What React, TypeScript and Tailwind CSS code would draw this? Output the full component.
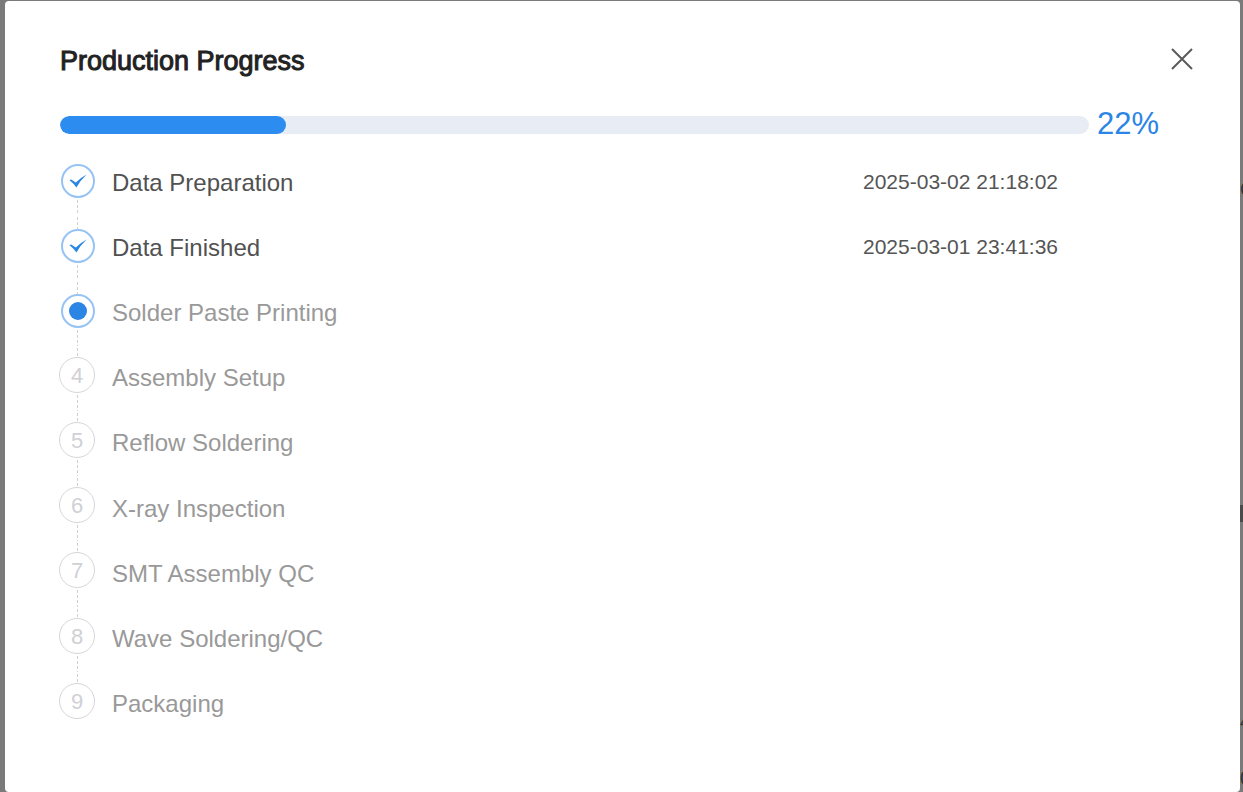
import { clsx } from 'clsx';

type Status = 'done' | 'current' | 'pending';

type Step = {
  label: string;
  status: Status;
  time?: string;
};

const progress = 22;

const steps: Step[] = [
  { label: 'Data Preparation', status: 'done', time: '2025-03-02 21:18:02' },
  { label: 'Data Finished', status: 'done', time: '2025-03-01 23:41:36' },
  { label: 'Solder Paste Printing', status: 'current' },
  { label: 'Assembly Setup', status: 'pending' },
  { label: 'Reflow Soldering', status: 'pending' },
  { label: 'X-ray Inspection', status: 'pending' },
  { label: 'SMT Assembly QC', status: 'pending' },
  { label: 'Wave Soldering/QC', status: 'pending' },
  { label: 'Packaging', status: 'pending' },
];

function Badge({ status, index }: { status: Status; index: number }) {
  if (status === 'pending') {
    return (
      <span className="flex size-9 shrink-0 items-center justify-center rounded-full border border-[#d6d6da] pt-0.5 text-[22px] leading-none text-[#d0d0d6]">
        {index + 1}
      </span>
    );
  }

  return (
    <span className="flex size-[34px] shrink-0 items-center justify-center self-end rounded-full border-2 border-[#96c3f4]">
      {status === 'done' ? (
        <svg viewBox="0 0 18 14" className="h-[14px] w-[18px]" fill="#2b85e4" aria-hidden="true">
          <path d="M0.4 6 L2.2 5.6 L6.8 8.6 Q11.5 3.6 17.6 0.4 Q11.6 6 7.4 13.4 Q4.4 9.4 0.4 6 Z" />
        </svg>
      ) : (
        <span className="size-[18px] rounded-full bg-[#2b85e4]" />
      )}
    </span>
  );
}

function Connector({ hidden, className }: { hidden: boolean; className: string }) {
  return (
    <span
      className={clsx(
        'w-px bg-[repeating-linear-gradient(to_bottom,transparent_0px,transparent_2px,#cfcfcf_2px,#cfcfcf_5px)]',
        hidden && 'invisible',
        className
      )}
    />
  );
}

function StepRow({ step, index }: { step: Step; index: number }) {
  return (
    <li className="flex items-center">
      <div className="flex h-full w-9 flex-col items-center">
        <Connector
          hidden={index === 0}
          className={step.status === 'pending' ? 'h-[11px]' : 'h-[14px]'}
        />
        <Badge status={step.status} index={index} />
        <Connector hidden={index === steps.length - 1} className="flex-1" />
      </div>
      <span
        className={clsx(
          'ml-[17px] flex-1 text-2xl',
          step.status === 'done' ? 'text-[#515151]' : 'text-[#999999]'
        )}
      >
        {step.label}
      </span>
      {step.time && (
        <time className="mr-32 pb-px text-[21px] leading-8 text-[#555555]">{step.time}</time>
      )}
    </li>
  );
}

// Page content that peeks out from under the dialog at the right edge
function Backdrop() {
  return (
    <div
      aria-hidden="true"
      className="absolute inset-y-0 right-0 flex w-[3px] flex-col overflow-hidden bg-[#7a7a7a] pt-[179px] text-xl leading-none text-[#333333]"
    >
      <span className="h-[326px]">C</span>
      <span className="mb-[189px] h-[17px] bg-[#4a4a4a]" />
      <span className="h-[57px]">4</span>
      <span>0</span>
    </div>
  );
}

export default function App() {
  return (
    <div className="relative min-h-screen bg-[#7a7a7a] pt-px pr-[3px] pl-[5px] font-['Liberation_Sans',Arial,sans-serif]">
      <Backdrop />
      <section
        role="dialog"
        aria-labelledby="progress-title"
        className="relative min-h-[791px] rounded-[4px] bg-white px-[54px] py-10"
      >
        <header className="flex items-start justify-between pl-px">
          <h1
            id="progress-title"
            className="text-[27px] leading-10 text-[#222222] [-webkit-text-stroke:1px_#222222]"
          >
            Production Progress
          </h1>
          <button type="button" aria-label="Close" className="mt-1.5 -mr-2 cursor-pointer text-[#5a5a5a]">
            <svg viewBox="0 0 24 24" className="size-6" stroke="currentColor" strokeWidth="2" fill="none">
              <path d="M2 2 L22 22 M22 2 L2 22" />
            </svg>
          </button>
        </header>

        <div className="mt-6 mr-[27px] flex h-10 items-center gap-2 pl-px">
          <div
            role="progressbar"
            aria-valuenow={progress}
            aria-labelledby="progress-title"
            className="h-[18px] flex-1 overflow-hidden rounded-full bg-[#e8ecf4]"
          >
            <div className="h-full rounded-full bg-[#2d8cf0]" style={{ width: `${progress}%` }} />
          </div>
          <span className="pb-0.5 text-[31px] leading-9 text-[#2b85e4]">{progress}%</span>
        </div>

        <ol className="mt-[5px] grid h-[587px] auto-rows-fr">
          {steps.map((step, i) => (
            <StepRow key={step.label} step={step} index={i} />
          ))}
        </ol>
      </section>
    </div>
  );
}
